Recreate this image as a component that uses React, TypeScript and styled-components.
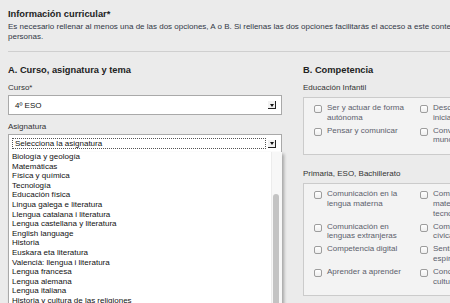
import React from "react";
import styled, { createGlobalStyle } from "styled-components";

const Global = createGlobalStyle`
  html, body { margin: 0; padding: 0; background: #ebebeb; overflow: hidden; }
  body {
    width: 450px;
    height: 303px;
    font-family: "Liberation Sans", Arial, Helvetica, sans-serif;
  }
`;

const Page = styled.div`
  width: 640px;
  padding: 8px 0 0 8px;
  box-sizing: border-box;
`;

const Title = styled.h1`
  margin: 0;
  font-size: 9.3px;
  line-height: 12px;
  font-weight: bold;
  color: #222;
`;

const Desc = styled.p`
  margin: 2px 0 0;
  font-size: 8px;
  line-height: 10px;
  color: #323846;
  white-space: nowrap;
`;

const Separator = styled.hr`
  margin: 9px 0 0;
  border: 0;
  border-top: 1px solid #cfcfcf;
  height: 0;
`;

const Columns = styled.div`
  display: flex;
  gap: 21px;
  margin-top: 12px;
  align-items: flex-start;
`;

const LeftCol = styled.section`
  width: 274px;
  flex: none;
  display: flex;
  flex-direction: column;
`;

const RightCol = styled.section`
  width: 260px;
  flex: none;
  display: flex;
  flex-direction: column;
`;

const SectionTitle = styled.h2`
  margin: 0;
  font-size: 9.3px;
  line-height: 12px;
  font-weight: bold;
  color: #222;
`;

const FieldLabel = styled.div<{ $gap?: number }>`
  font-size: 8px;
  line-height: 10px;
  color: #333;
  margin-top: ${(p) => p.$gap ?? 7}px;
  margin-bottom: 2px;
`;

const SelectBox = styled.div<{ $h: number; $pad: string }>`
  position: relative;
  box-sizing: border-box;
  height: ${(p) => p.$h}px;
  background: #fff;
  border: 1px solid #a9a9a9;
  display: flex;
  align-items: center;
  padding: ${(p) => p.$pad};
  font-size: 8px;
  color: #111;
`;

const SelectText = styled.span`
  flex: 1;
  white-space: nowrap;
`;

const FocusRing = styled.div`
  flex: 1;
  box-sizing: border-box;
  height: 11px;
  border: 1px dotted #555;
  padding-left: 2px;
  display: flex;
  align-items: center;
  margin-right: 2px;
  white-space: nowrap;
`;

const Arrow = styled.span`
  position: relative;
  flex: none;
  box-sizing: border-box;
  width: 8px;
  height: 8px;
  background: #f2f2f2;
  border-right: 1px solid #222;
  border-bottom: 1px solid #222;
  &::after {
    content: "";
    position: absolute;
    left: 1.5px;
    top: 2.5px;
    border-left: 2px solid transparent;
    border-right: 2px solid transparent;
    border-top: 3px solid #111;
  }
`;

const Dropdown = styled.div`
  position: absolute;
  top: 100%;
  left: -1px;
  width: 274px;
  height: 170px;
  box-sizing: border-box;
  background: #fff;
  border-left: 1px solid #a9a9a9;
  box-shadow: 2px 2px 3px rgba(0, 0, 0, 0.3);
  z-index: 2;
  overflow: hidden;
`;

const Option = styled.div`
  font-size: 8px;
  line-height: 9.6px;
  padding-left: 3px;
  color: #111;
  white-space: nowrap;
`;

const Track = styled.div`
  position: absolute;
  top: 0;
  right: 0;
  bottom: 0;
  width: 10px;
  background: #f7f7f7;
  border-left: 1px solid #ececec;
`;

const Thumb = styled.div`
  position: absolute;
  left: 1px;
  top: 42px;
  width: 6px;
  height: 200px;
  border-radius: 3px;
  background: #c3c3c3;
`;

const GroupLabel = styled.div<{ $gap: number }>`
  font-size: 8px;
  line-height: 10px;
  color: #333;
  margin-top: ${(p) => p.$gap}px;
  margin-bottom: 4px;
`;

const CheckPanel = styled.div`
  box-sizing: border-box;
  background: #f3f3f3;
  border: 1px solid #cbcbcb;
  padding: 5px 10px 9px;
  display: grid;
  grid-template-columns: 106px 106px;
  row-gap: 3px;
`;

const CheckItem = styled.label`
  display: flex;
  align-items: flex-start;
  font-size: 8px;
  line-height: 9.8px;
  color: #5b606c;
`;

const CheckBox = styled.span`
  flex: none;
  box-sizing: border-box;
  width: 8px;
  height: 8px;
  margin-top: 2px;
  margin-right: 5px;
  border: 1px solid #9d9d9d;
  border-radius: 2px;
  background: linear-gradient(#ffffff, #eeeeee);
`;

const CheckText = styled.span`
  white-space: nowrap;
`;

const subjects = [
  "Biología y geología",
  "Matemáticas",
  "Física y química",
  "Tecnología",
  "Educación física",
  "Lingua galega e literatura",
  "Llengua catalana i literatura",
  "Lengua castellana y literatura",
  "English language",
  "Historia",
  "Euskara eta literatura",
  "Valencià: llengua i literatura",
  "Lengua francesa",
  "Lengua alemana",
  "Lengua italiana",
  "Historia y cultura de las religiones",
  "Filosofía",
];

const infantil: string[][] = [
  ["Ser y actuar de forma", "autónoma"],
  ["Descubrir y tener", "iniciativa"],
  ["Pensar y comunicar"],
  ["Convivir y habitar el", "mundo"],
];

const primaria: string[][] = [
  ["Comunicación en la", "lengua materna"],
  ["Competencia", "matemática, ciencia y", "tecnología"],
  ["Comunicación en", "lenguas extranjeras"],
  ["Competencias sociales y", "cívicas"],
  ["Competencia digital"],
  ["Sentido de iniciativa y", "espíritu emprendedor"],
  ["Aprender a aprender"],
  ["Conciencia y expresiones", "culturales"],
];

function Checks({ items }: { items: string[][] }) {
  return (
    <CheckPanel>
      {items.map((lines, i) => (
        <CheckItem key={i}>
          <CheckBox />
          <CheckText>
            {lines.map((l, j) => (
              <React.Fragment key={j}>
                {j > 0 && <br />}
                {l}
              </React.Fragment>
            ))}
          </CheckText>
        </CheckItem>
      ))}
    </CheckPanel>
  );
}

export default function App() {
  return (
    <>
      <Global />
      <Page>
        <Title>Información curricular*</Title>
        <Desc>
          Es necesario rellenar al menos una de las dos opciones, A o B. Si rellenas las dos opciones
          facilitarás el acceso a este contenido a más
          <br />
          personas.
        </Desc>
        <Separator />
        <Columns>
          <LeftCol>
            <SectionTitle>A. Curso, asignatura y tema</SectionTitle>
            <FieldLabel>Curso*</FieldLabel>
            <SelectBox $h={20} $pad="0 5px 0 6px">
              <SelectText>4º ESO</SelectText>
              <Arrow />
            </SelectBox>
            <FieldLabel>Asignatura</FieldLabel>
            <SelectBox $h={19} $pad="0 5px 0 3px">
              <FocusRing>Selecciona la asignatura</FocusRing>
              <Arrow />
              <Dropdown>
                {subjects.map((s) => (
                  <Option key={s}>{s}</Option>
                ))}
                <Track>
                  <Thumb />
                </Track>
              </Dropdown>
            </SelectBox>
          </LeftCol>
          <RightCol>
            <SectionTitle>B. Competencia</SectionTitle>
            <GroupLabel $gap={7}>Educación Infantil</GroupLabel>
            <Checks items={infantil} />
            <GroupLabel $gap={14}>Primaria, ESO, Bachillerato</GroupLabel>
            <Checks items={primaria} />
          </RightCol>
        </Columns>
      </Page>
    </>
  );
}
